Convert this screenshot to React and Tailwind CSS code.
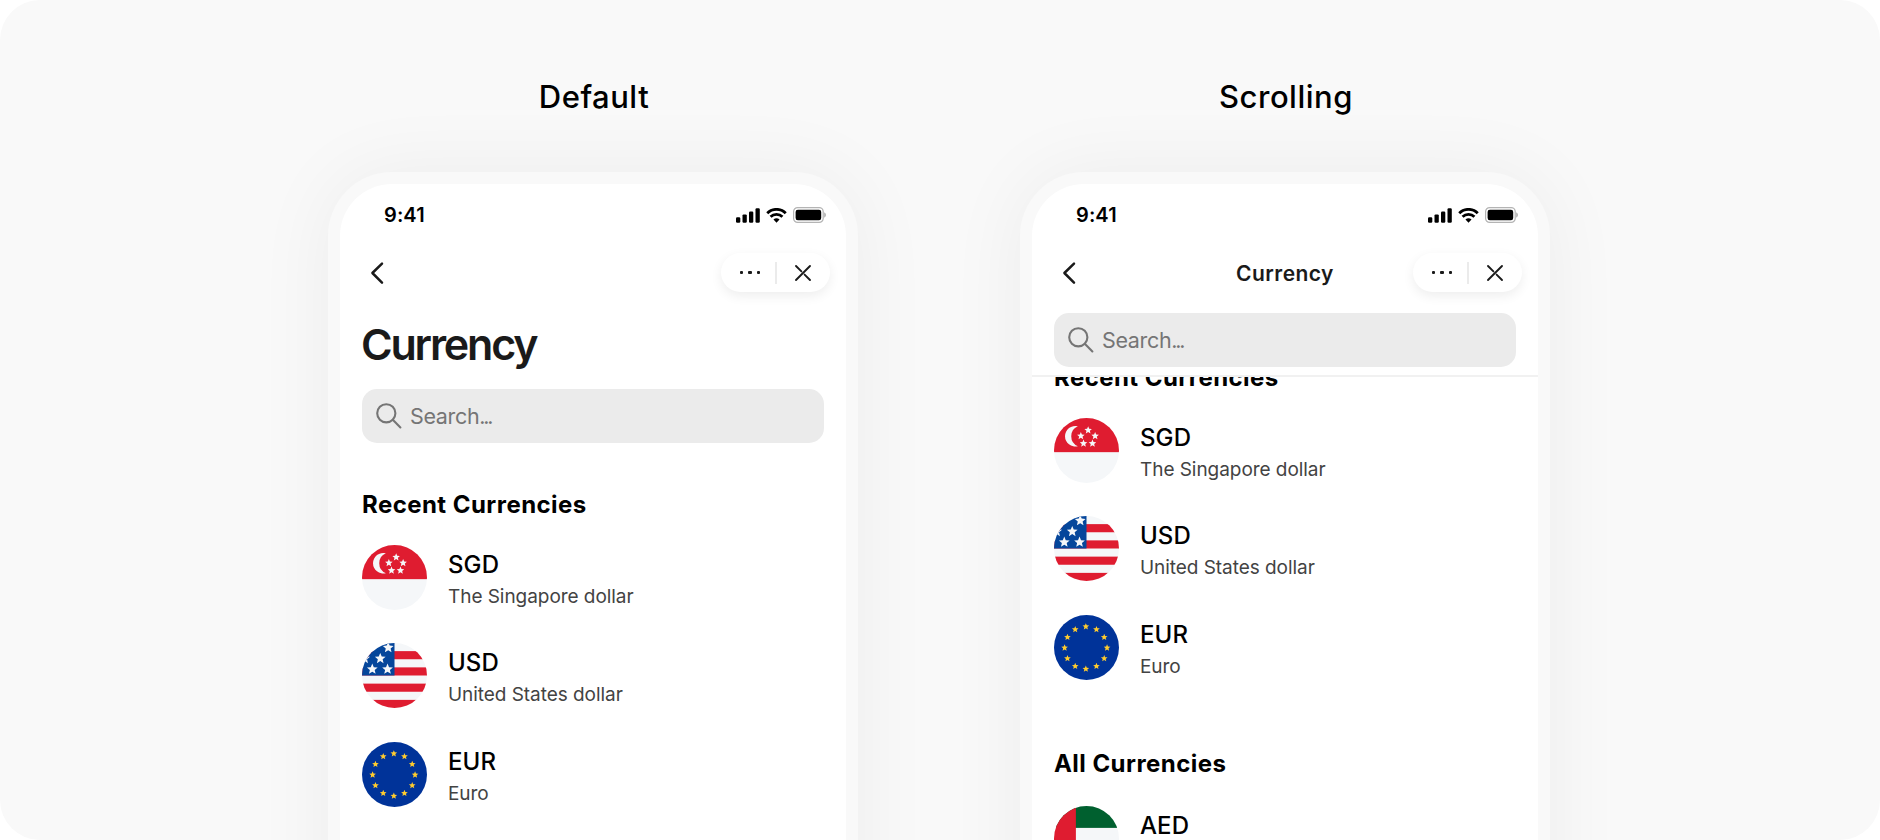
const recent = [
  { code: 'SGD', name: 'The Singapore dollar', Flag: FlagSG },
  { code: 'USD', name: 'United States dollar', Flag: FlagUS },
  { code: 'EUR', name: 'Euro', Flag: FlagEU },
];

const all = [{ code: 'AED', name: 'United Arab Emirates dirham', Flag: FlagAE }];

function starPoints(cx, cy, r) {
  return Array.from({ length: 10 }, (_, i) => {
    const a = (Math.PI / 5) * i - Math.PI / 2;
    const d = i % 2 ? r * 0.45 : r;
    return `${(cx + d * Math.cos(a)).toFixed(2)},${(cy + d * Math.sin(a)).toFixed(2)}`;
  }).join(' ');
}

function Star({ x, y, r, fill = '#f5f7f9' }) {
  return <polygon points={starPoints(x, y, r)} fill={fill} />;
}

function Flag({ children }) {
  return (
    <svg viewBox="0 0 196 196" className="size-full">
      {children}
    </svg>
  );
}

function FlagSG() {
  return (
    <Flag>
      <rect width="196" height="196" fill="#f5f7f9" />
      <rect width="196" height="103" fill="#df1c30" />
      <path d="M72 25A31 31 0 1 0 72 85A32.5 32.5 0 0 1 72 25Z" fill="#f5f7f9" />
      {[[103, 37], [81, 54], [124, 54], [89, 77], [116, 77]].map(([x, y]) => (
        <Star key={`${x}-${y}`} x={x} y={y} r={12} />
      ))}
    </Flag>
  );
}

function FlagUS() {
  return (
    <Flag>
      <rect width="196" height="196" fill="#f5f7f9" />
      {[24.5, 73.5, 122.5, 171.5].map((y) => (
        <rect key={y} y={y} width="196" height="24.5" fill="#df1c30" />
      ))}
      <rect width="98" height="98" fill="#05469b" />
      {[[79, 14], [8, 47], [55, 47], [31, 79], [77, 79]].map(([x, y]) => (
        <Star key={`${x}-${y}`} x={x} y={y} r={17} />
      ))}
    </Flag>
  );
}

function FlagEU() {
  return (
    <Flag>
      <rect width="196" height="196" fill="#003399" />
      {Array.from({ length: 12 }, (_, i) => {
        const a = (Math.PI / 6) * i;
        return <Star key={i} x={96 + 64 * Math.cos(a)} y={99 + 64 * Math.sin(a)} r={10.5} fill="#ffcc2e" />;
      })}
    </Flag>
  );
}

function FlagAE() {
  return (
    <Flag>
      <rect width="196" height="196" fill="#f5f7f9" />
      <rect width="196" height="66" fill="#00602f" />
      <rect y="130" width="196" height="66" fill="#111111" />
      <rect width="66" height="196" fill="#df1c30" />
    </Flag>
  );
}

function StatusBar() {
  return (
    <div className="flex h-[62px] items-center justify-between pl-[44px] pr-[20px]">
      <span className="text-[20px] font-semibold leading-none tracking-[0.1px]">9:41</span>
      <div className="flex items-center gap-[6px]">
        <svg width="24" height="15" viewBox="0 0 24 15">
          <rect x="0" y="9.2" width="4.3" height="5.6" rx="1.2" />
          <rect x="6.5" y="6.4" width="4.3" height="8.4" rx="1.2" />
          <rect x="13" y="3.5" width="4.3" height="11.3" rx="1.2" />
          <rect x="19.5" y="0.3" width="4.3" height="14.5" rx="1.2" />
        </svg>
        <svg width="21" height="15" viewBox="0 0 20.5 15" fill="none" stroke="#000" strokeWidth="2.8">
          <path d="M1 5.2A13 13 0 0 1 19.5 5.2" />
          <path d="M4.3 8.8A8.6 8.6 0 0 1 16.2 8.8" />
          <path d="M7.2 11.6A4.4 4.4 0 0 1 13.3 11.6L10.25 14.8Z" fill="#000" stroke="none" />
        </svg>
        <svg width="33" height="16" viewBox="0 0 33 16">
          <rect x="0.6" y="0.6" width="29.6" height="14.8" rx="4" fill="none" stroke="#b4b4b4" strokeWidth="1.2" />
          <rect x="2.6" y="2.7" width="25.6" height="10.6" rx="2.2" />
          <path d="M31.3 5.8V10.2A2.4 2.4 0 0 0 31.3 5.8Z" fill="#b0b0b0" stroke="#b0b0b0" strokeWidth="0.6" />
        </svg>
      </div>
    </div>
  );
}

function NavBar({ title }) {
  return (
    <div className="grid h-[53px] grid-cols-[109px_1fr_109px] items-center px-[16px]">
      <button className="pl-[13px]" aria-label="Back">
        <svg width="16" height="24" viewBox="0 0 16 24" fill="none" stroke="#1a1a1a" strokeWidth="2.5" strokeLinecap="round" strokeLinejoin="round">
          <path d="M13 2.6L3.4 12L13 21.6" />
        </svg>
      </button>
      <h2 className="pt-[2px] text-center text-[21px] font-semibold leading-none tracking-[0.45px] text-[#1a1a1a]">{title}</h2>
      <div className="flex h-[39px] items-center rounded-full bg-white shadow-[0_4px_12px_rgba(0,0,0,0.07)]">
        <button className="flex w-[54px] shrink-0 items-center justify-center gap-[4.7px] pl-[4px]" aria-label="More">
          <span className="size-[3.8px] rounded-[1px] bg-[#1a1a1a]" />
          <span className="size-[3.8px] rounded-[1px] bg-[#1a1a1a]" />
          <span className="size-[3.8px] rounded-[1px] bg-[#1a1a1a]" />
        </button>
        <span className="h-[22px] w-[1.5px] bg-[#ebebeb]" />
        <button className="flex flex-1 items-center justify-center" aria-label="Close">
          <svg width="18" height="18" viewBox="0 0 18 18" fill="none" stroke="#1a1a1a" strokeWidth="1.9" strokeLinecap="round">
            <path d="M2 16L16 2M2 2L7.4 7.4M10.6 10.6L16 16" />
          </svg>
        </button>
      </div>
    </div>
  );
}

function SearchField() {
  return (
    <div className="mx-[22px] flex h-[54px] items-center gap-[8px] rounded-[15px] bg-[#ebebeb] pl-[14px] text-[#757575]">
      <svg width="26" height="26" viewBox="0 0 26 26" fill="none" stroke="currentColor" strokeWidth="2.1" strokeLinecap="round">
        <circle cx="10.3" cy="10.3" r="9.1" />
        <path d="M16.8 16.8L24.4 24.4" />
      </svg>
      <span className="pt-[2px] text-[21.5px] leading-none tracking-[-0.35px]">
        Search<span className="tracking-[-2.2px]">...</span>
      </span>
    </div>
  );
}

function SectionTitle({ children }) {
  return <h3 className="mb-[24px] px-[22px] pt-px text-[24px] font-bold leading-8 tracking-[0.45px]">{children}</h3>;
}

function CurrencyList({ items }) {
  return (
    <ul className="flex flex-col gap-[33px] px-[21.5px]">
      {items.map(({ code, name, Flag }) => (
        <li key={code} className="flex h-[65.4px] gap-[21.5px]">
          <div className="size-[65px] shrink-0 overflow-hidden rounded-full">
            <Flag />
          </div>
          <div className="pt-[4px]">
            <div className="text-[24px] font-medium leading-8 tracking-[0.1px]">{code}</div>
            <div className="text-[19px] leading-8 tracking-[-0.05px] text-[#434343]">{name}</div>
          </div>
        </li>
      ))}
    </ul>
  );
}

function Preview({ label, children }) {
  return (
    <section className="flex w-[530px] shrink-0 flex-col">
      <h1 className="h-[172px] shrink-0 pl-[2px] pt-[77px] text-center text-[31px] font-medium leading-10 tracking-[0.5px]">{label}</h1>
      <div className="h-[1100px] shrink-0 rounded-[64px] bg-[#f9f9f9] p-[12px] shadow-[0_0_80px_rgba(0,0,0,0.055)]">
        <div className="h-full overflow-hidden rounded-[52px] bg-white">{children}</div>
      </div>
    </section>
  );
}

export default function App() {
  return (
    <main className="flex h-[840px] w-[1880px] gap-[162px] overflow-hidden rounded-[40px] bg-[#f9f9f9] pl-[328px] font-['Inter',sans-serif] text-black">
      <Preview label="Default">
        <StatusBar />
        <NavBar />
        <div className="flex h-[90px] items-center px-[21px] text-[43px] font-semibold tracking-[-2.2px] text-[#1a1a1a]">
          Currency
        </div>
        <SearchField />
        <div className="pt-[45px]">
          <SectionTitle>Recent Currencies</SectionTitle>
          <CurrencyList items={recent} />
        </div>
      </Preview>

      <Preview label="Scrolling">
        <div className="border-b-2 border-[#f1f1f1] pb-[8px]">
          <StatusBar />
          <NavBar title="Currency" />
          <div className="pt-[14px]">
            <SearchField />
          </div>
        </div>
        {/* list is scrolled, so the first heading slides under the header */}
        <div className="overflow-hidden">
          <div className="-mt-[16px]">
            <SectionTitle>Recent Currencies</SectionTitle>
            <CurrencyList items={recent} />
          </div>
          <div className="pt-[67px]">
            <SectionTitle>All Currencies</SectionTitle>
            <div className="pt-[2px]">
              <CurrencyList items={all} />
            </div>
          </div>
        </div>
      </Preview>
    </main>
  );
}
